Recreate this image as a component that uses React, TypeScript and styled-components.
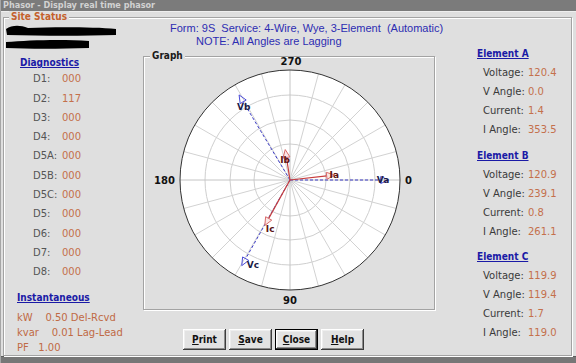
import React from "react";
import styled, { createGlobalStyle } from "styled-components";

const GlobalStyle = createGlobalStyle`
  html, body { margin: 0; padding: 0; background: #dfdfdf; }
  body { font-family: "DejaVu Sans", Verdana, sans-serif; }
  #root { width: 576px; height: 363px; }
`;

const Window = styled.div`
  width: 576px;
  height: 363px;
  box-sizing: border-box;
  display: flex;
  flex-direction: column;
  background: #dfdfdf;
  border-left: 1px solid #a6a6a6;
  overflow: hidden;
`;

const TitleBar = styled.div`
  height: 14px;
  line-height: 14px;
  padding-left: 2px;
  background: #7b7b7b;
  color: #d2d2d2;
  font: bold 9px "DejaVu Sans Condensed", sans-serif;
  border-bottom: 1px solid #efefef;
`;

const Main = styled.div`
  flex: 1;
  display: flex;
  padding: 5px 4px 0 2px;
`;

const StatusBar = styled.div`
  height: 8px;
  background: #777;
  border-top: 1px solid #5c5c5c;
  box-sizing: border-box;
`;

const GroupBox = styled.div<{ $grow?: boolean; $height?: number; $mt?: number }>`
  position: relative;
  box-sizing: border-box;
  border: 1px solid #a3a3a3;
  box-shadow: inset 1px 1px 0 #fff, 1px 1px 0 #fff;
  ${(p) => (p.$grow ? "flex: 1;" : "")}
  ${(p) => (p.$height ? `height: ${p.$height}px;` : "")}
  margin-top: ${(p) => p.$mt ?? 0}px;
`;

const Caption = styled.span<{ $color: string; $left: number }>`
  position: absolute;
  top: -7px;
  left: ${(p) => p.$left}px;
  padding: 0 2px;
  background: #dfdfdf;
  color: ${(p) => p.$color};
  font: bold 10px/12px "DejaVu Sans Condensed", sans-serif;
`;

const StatusGrid = styled.div`
  display: grid;
  grid-template-columns: 139px 292px 1fr;
  grid-template-rows: 26px 1fr;
  height: 100%;
  padding-top: 4px;
  box-sizing: border-box;
`;

const Redacted = styled.svg`
  margin-top: 2px;
  display: block;
`;

const Header = styled.div`
  font: 11px/13px "Liberation Sans", Arial, sans-serif;
  color: #2d2db2;
  white-space: pre;
`;

const HeaderLine = styled.div<{ $indent: number }>`
  padding-left: ${(p) => p.$indent}px;
`;

const LeftCol = styled.div`
  padding: 9px 0 0 13px;
`;

const CenterCol = styled.div`
  display: flex;
  flex-direction: column;
`;

const RightCol = styled.div`
  padding-left: 42px;
`;

const Heading = styled.div<{ $mt?: number; $ml?: number }>`
  font: bold 10px/12px "DejaVu Sans Condensed", sans-serif;
  color: #1a1aa6;
  text-decoration: underline;
  margin-top: ${(p) => p.$mt ?? 0}px;
  margin-left: ${(p) => p.$ml ?? 0}px;
`;

const Row = styled.div<{ $h: number; $pl: number }>`
  display: flex;
  align-items: center;
  height: ${(p) => p.$h}px;
  padding-left: ${(p) => p.$pl}px;
  font-size: 10px;
`;

const List = styled.div<{ $mt: number }>`
  margin-top: ${(p) => p.$mt}px;
`;

const Label = styled.span<{ $w: number; $dark?: boolean }>`
  width: ${(p) => p.$w}px;
  color: ${(p) => (p.$dark ? "#3a3a3a" : "#555")};
`;

const Value = styled.span`
  color: #c4704c;
`;

const InstLine = styled.div`
  height: 15px;
  line-height: 15px;
  font-size: 10px;
  color: #bf6a45;
  white-space: pre;
`;

const ButtonRow = styled.div`
  display: flex;
  gap: 3px;
  margin-top: 19px;
  padding-left: 40px;
`;

const Button = styled.button<{ $default?: boolean }>`
  width: 43px;
  height: 21px;
  padding: 0;
  box-sizing: border-box;
  background: #e2e2e2;
  color: #111;
  font: bold 10px "DejaVu Sans Condensed", sans-serif;
  border: ${(p) => (p.$default ? "1px solid #000" : "none")};
  box-shadow: inset -1px -1px 0 #3c3c3c, inset 1px 1px 0 #fff,
    inset -2px -2px 0 #8c8c8c, inset 2px 2px 0 #eee;
`;

const diags: [string, string][] = [
  ["D1", "000"],
  ["D2", "117"],
  ["D3", "000"],
  ["D4", "000"],
  ["D5A", "000"],
  ["D5B", "000"],
  ["D5C", "000"],
  ["D5", "000"],
  ["D6", "000"],
  ["D7", "000"],
  ["D8", "000"],
];

const elements = [
  { name: "Element A", voltage: "120.4", vAngle: "0.0", current: "1.4", iAngle: "353.5" },
  { name: "Element B", voltage: "120.9", vAngle: "239.1", current: "0.8", iAngle: "261.1" },
  { name: "Element C", voltage: "119.9", vAngle: "119.4", current: "1.7", iAngle: "119.0" },
];

type Phasor = { name: string; kind: "v" | "i"; mag: number; angle: number; lx: number; ly: number };

const phasors: Phasor[] = [
  { name: "Va", kind: "v", mag: 120.4, angle: 0, lx: -12, ly: 3 },
  { name: "Vb", kind: "v", mag: 120.9, angle: 239.1, lx: -2, ly: 15 },
  { name: "Vc", kind: "v", mag: 119.9, angle: 119.4, lx: 5, ly: 2 },
  { name: "Ia", kind: "i", mag: 1.4, angle: 353.5, lx: -5, ly: 3 },
  { name: "Ib", kind: "i", mag: 0.8, angle: 261.1, lx: -5, ly: 13 },
  { name: "Ic", kind: "i", mag: 1.7, angle: 119.0, lx: 1, ly: 7 },
];

const CX = 146;
const CY = 123;
const R = 110;
const rings = [36, 60, 85];
const spokes = Array.from({ length: 24 }, (_, i) => i * 15);

const lengthOf = (p: Phasor) => (p.kind === "v" ? p.mag * 0.82 : 12 + p.mag * 23.5);

function PhasorArrow({ p }: { p: Phasor }) {
  const a = (p.angle * Math.PI) / 180;
  const ux = Math.cos(a);
  const uy = Math.sin(a);
  const len = lengthOf(p);
  const tx = CX + ux * len;
  const ty = CY + uy * len;
  const bx = tx - ux * 8;
  const by = ty - uy * 8;
  const head = `${tx},${ty} ${bx - uy * 3.5},${by + ux * 3.5} ${bx + uy * 3.5},${by - ux * 3.5}`;
  const isV = p.kind === "v";
  const color = isV ? "#3c3cc8" : "#c83c3c";
  return (
    <g>
      <line
        x1={CX}
        y1={CY}
        x2={bx}
        y2={by}
        stroke={color}
        strokeWidth={isV ? 1 : 1.2}
        strokeDasharray={isV ? "3 2" : undefined}
      />
      <polygon points={head} fill={isV ? "none" : "#fbe6e6"} stroke={isV ? "#4a4ad8" : "#d86a6a"} strokeWidth={1} />
      <text
        x={tx + p.lx}
        y={ty + p.ly}
        fontFamily="DejaVu Sans, sans-serif"
        fontWeight="bold"
        fontSize={9}
        fill={isV ? "#1c1c48" : "#5a1414"}
      >
        {p.name}
      </text>
    </g>
  );
}

function PolarGraph() {
  return (
    <svg width={290} height={252} style={{ display: "block" }}>
      <circle cx={CX} cy={CY} r={R} fill="#fff" />
      {rings.map((r) => (
        <circle key={r} cx={CX} cy={CY} r={r} fill="none" stroke="#cfcfcf" />
      ))}
      {spokes.map((deg) => {
        const a = (deg * Math.PI) / 180;
        return (
          <line
            key={deg}
            x1={CX}
            y1={CY}
            x2={CX + Math.cos(a) * R}
            y2={CY + Math.sin(a) * R}
            stroke={deg % 90 === 0 ? "#c4c4c4" : "#d2d2d2"}
          />
        );
      })}
      <circle cx={CX} cy={CY} r={R} fill="none" stroke="#333" />
      <g fontFamily="DejaVu Sans, sans-serif" fontWeight="bold" fontSize={10} fill="#111">
        <text x={CX + 1} y={8} textAnchor="middle">270</text>
        <text x={10} y={127}>180</text>
        <text x={261} y={127}>0</text>
        <text x={CX} y={247} textAnchor="middle">90</text>
      </g>
      {phasors.map((p) => (
        <PhasorArrow key={p.name} p={p} />
      ))}
    </svg>
  );
}

export default function App() {
  return (
    <>
      <GlobalStyle />
      <Window>
        <TitleBar>Phasor - Display real time phasor</TitleBar>
        <Main>
          <GroupBox $grow>
            <Caption $color="#c4602c" $left={5}>Site Status</Caption>
            <StatusGrid>
              <div>
                <Redacted width={114} height={26}>
                  <path d="M2 5 C8 1, 16 1, 24 4 C50 3, 90 3, 112 5 L112 11 C80 12, 40 12, 3 11 Z" fill="#000" />
                  <path d="M2 18 C25 16, 60 15, 85 17 L85 24 C55 25, 25 25, 2 24 Z" fill="#000" />
                </Redacted>
              </div>
              <Header>
                <HeaderLine $indent={27}>Form: 9S  Service: 4-Wire, Wye, 3-Element  (Automatic)</HeaderLine>
                <HeaderLine $indent={53}>NOTE: All Angles are Lagging</HeaderLine>
              </Header>
              <div />

              <LeftCol>
                <Heading $ml={3}>Diagnostics</Heading>
                <List $mt={0}>
                  {diags.map(([k, v]) => (
                    <Row key={k} $h={19.3} $pl={16}>
                      <Label $w={29}>{k}:</Label>
                      <Value>{v}</Value>
                    </Row>
                  ))}
                </List>
                <Heading $mt={11}>Instantaneous</Heading>
                <List $mt={6}>
                  <InstLine>{"kW    0.50 Del-Rcvd"}</InstLine>
                  <InstLine>{"kvar    0.01 Lag-Lead"}</InstLine>
                  <InstLine>{"PF   1.00"}</InstLine>
                </List>
              </LeftCol>

              <CenterCol>
                <GroupBox $height={254} $mt={8}>
                  <Caption $color="#1a1a1a" $left={6}>Graph</Caption>
                  <PolarGraph />
                </GroupBox>
                <ButtonRow>
                  <Button><u>P</u>rint</Button>
                  <Button><u>S</u>ave</Button>
                  <Button $default><u>C</u>lose</Button>
                  <Button><u>H</u>elp</Button>
                </ButtonRow>
              </CenterCol>

              <RightCol>
                {elements.map((el, i) => (
                  <div key={el.name}>
                    <Heading $mt={i === 0 ? 0 : 10.5}>{el.name}</Heading>
                    <List $mt={3}>
                      <Row $h={19} $pl={6}>
                        <Label $w={45} $dark>Voltage:</Label>
                        <Value>{el.voltage}</Value>
                      </Row>
                      <Row $h={19} $pl={6}>
                        <Label $w={45} $dark>V Angle:</Label>
                        <Value>{el.vAngle}</Value>
                      </Row>
                      <Row $h={19} $pl={6}>
                        <Label $w={45} $dark>Current:</Label>
                        <Value>{el.current}</Value>
                      </Row>
                      <Row $h={19} $pl={6}>
                        <Label $w={45} $dark>I Angle:</Label>
                        <Value>{el.iAngle}</Value>
                      </Row>
                    </List>
                  </div>
                ))}
              </RightCol>
            </StatusGrid>
          </GroupBox>
        </Main>
        <StatusBar />
      </Window>
    </>
  );
}
